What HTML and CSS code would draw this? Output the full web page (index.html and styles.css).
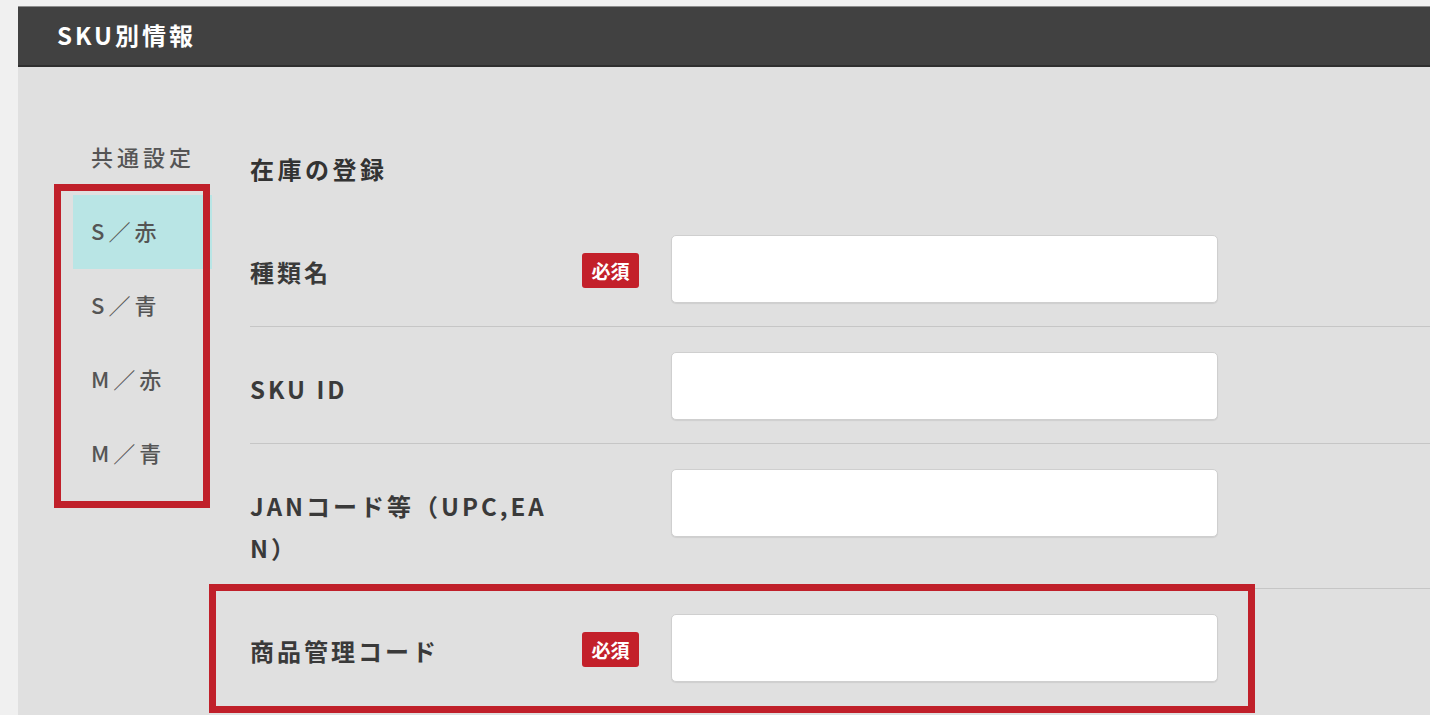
FILE: index.html
```html
<!DOCTYPE html>
<html lang="ja">
<head>
<meta charset="utf-8">
<title>SKU別情報</title>
<link rel="stylesheet" href="styles.css">
</head>
<body>
<div class="page">
  <section class="sku-section">
    <header class="sku-header">
      <h2 class="sku-title">SKU別情報</h2>
    </header>
    <div class="sku-panel">
      <nav class="sku-nav">
        <div class="nav-item">共通設定</div>
        <div class="nav-item is-active">S／赤</div>
        <div class="nav-item">S／青</div>
        <div class="nav-item">M／赤</div>
        <div class="nav-item">M／青</div>
      </nav>
      <div class="sku-main">
        <h3 class="main-heading">在庫の登録</h3>
        <div class="form-row">
          <div class="form-label">種類名</div>
          <div class="badge-slot"><span class="badge">必須</span></div>
          <input class="text-input" type="text">
        </div>
        <div class="form-row">
          <div class="form-label">SKU ID</div>
          <div class="badge-slot"></div>
          <input class="text-input" type="text">
        </div>
        <div class="form-row">
          <div class="form-label">JANコード等（UPC,EAN）</div>
          <div class="badge-slot"></div>
          <input class="text-input" type="text">
        </div>
        <div class="form-row">
          <div class="form-label">商品管理コード</div>
          <div class="badge-slot"><span class="badge">必須</span></div>
          <input class="text-input" type="text">
        </div>
      </div>
    </div>
  </section>
  <div class="annot annot-nav"></div>
  <div class="annot annot-row"></div>
</div>
</body>
</html>
```
FILE: styles.css
```css
html, body {
  margin: 0;
  padding: 0;
  height: 100%;
  overflow: hidden;
}
body {
  background: #f0f0f0;
  font-family: "Noto Sans CJK JP", "Noto Sans", sans-serif;
  color: #3a3a3a;
}
.page {
  position: relative;
  height: 100%;
  padding: 6px 0 0 18px;
  box-sizing: border-box;
}
.sku-section {
  height: 100%;
  display: flex;
  flex-direction: column;
}
.sku-header {
  background: #414141;
  border-top: 1px solid #8c8c8c;
  border-bottom: 2px solid #2f2f2f;
  box-shadow: 0 2px 0 #a9a9a9;
  height: 58px;
  box-sizing: content-box;
  display: flex;
  align-items: center;
  padding-left: 39px;
}
.sku-title {
  margin: 0 0 3px;
  color: #fff;
  font-size: 24px;
  font-weight: 700;
  letter-spacing: 3px;
  line-height: 1;
}
.sku-panel {
  flex: 1;
  background: #e0e0e0;
  display: flex;
  padding: 54px 0 0 55px;
  gap: 38px;
}
.sku-nav {
  width: 139px;
  flex: none;
  display: flex;
  flex-direction: column;
}
.nav-item {
  height: 74px;
  box-sizing: border-box;
  display: flex;
  align-items: center;
  padding: 0 0 5px 18px;
  font-size: 22px;
  font-weight: 500;
  letter-spacing: 4px;
  color: #555;
}
.nav-item.is-active {
  background: #b9e5e5;
}
.sku-main {
  flex: 1;
  display: flex;
  flex-direction: column;
}
.main-heading {
  margin: 28px 0 21px;
  line-height: 40px;
  font-size: 24px;
  font-weight: 700;
  letter-spacing: 3.5px;
  color: #333;
}
.form-row {
  display: flex;
  align-items: flex-start;
  padding: 25px 0 23px;
  border-top: 1px solid #c6c6c6;
}
.form-row:first-of-type {
  border-top: none;
}
.form-label {
  width: 300px;
  flex: none;
  padding-top: 16px;
  margin-bottom: -4px;
  line-height: 42px;
  font-size: 24px;
  font-weight: 700;
  letter-spacing: 3px;
  color: #3a3a3a;
  word-break: break-all;
}
.badge-slot {
  width: 57px;
  flex: none;
  margin: 0 32px;
  padding-top: 18px;
}
.badge {
  display: flex;
  align-items: center;
  justify-content: center;
  height: 35px;
  background: #c3202a;
  color: #fff;
  border-radius: 3px;
  font-size: 19px;
  font-weight: 700;
  letter-spacing: 0;
}
.text-input {
  width: 547px;
  height: 68px;
  box-sizing: border-box;
  margin: 0;
  background: #fff;
  border: 1px solid #cfcfcf;
  border-radius: 5px;
  box-shadow: 0 1px 1px rgba(0,0,0,0.08);
}
.annot {
  position: absolute;
  border: 7px solid #c0202a;
  box-sizing: border-box;
  pointer-events: none;
}
.annot-nav {
  left: 54px;
  top: 184px;
  width: 156px;
  height: 324px;
}
.annot-row {
  left: 209px;
  top: 584px;
  width: 1046px;
  height: 129px;
}
```
